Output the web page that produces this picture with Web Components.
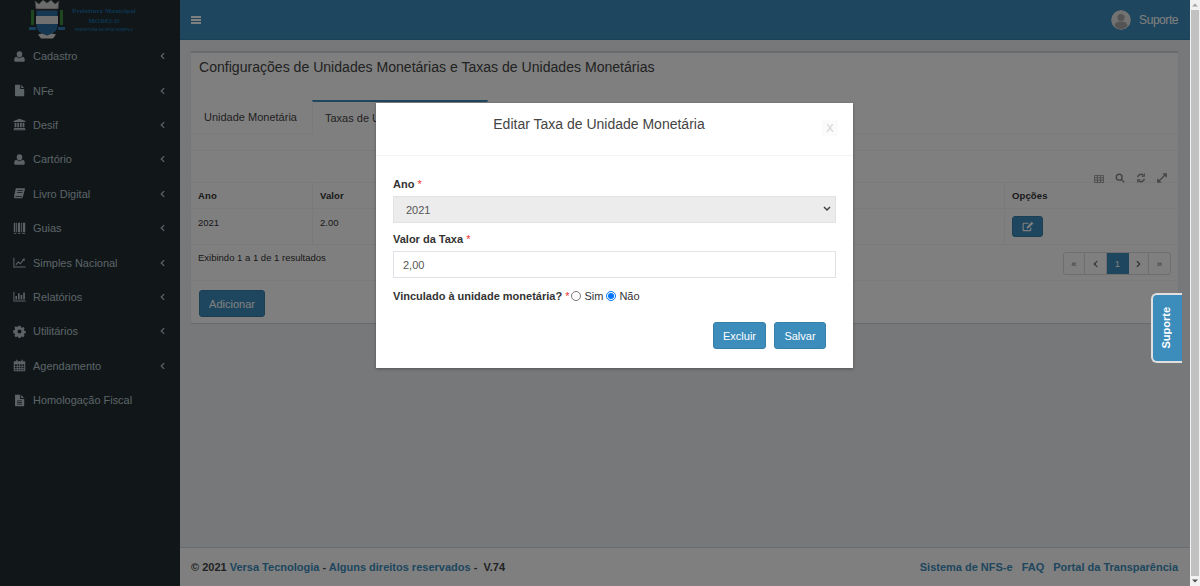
<!DOCTYPE html>
<html lang="pt-BR"><head><meta charset="utf-8"><title>Taxas</title>
<style>
html,body{margin:0;height:586px;overflow:hidden;font-family:"Liberation Sans",Arial,sans-serif}
body{display:flex}
</style></head><body>
<app-shell></app-shell><fake-scrollbar></fake-scrollbar>
<script>
const ICONS={
user:'<path d="M8 1.5a3.4 3.4 0 0 1 3.4 3.6c0 2-1.2 4-3.4 4S4.600 7.100 4.600 5.100A3.400 3.400 0 0 1 8 1.500zM4.400 8.400c.9 1 2.100 1.600 3.600 1.600s2.700-.6 3.600-1.600c1.900.2 2.900 1.700 2.900 4.100 0 1.300-.8 2-2 2H3.500c-1.200 0-2-.7-2-2 0-2.400 1-3.900 2.900-4.100z"/>',
file:'<path d="M2.500 1h6.300v5h5v8.200c0 .5-.3.8-.8.800H3.300c-.5 0-.8-.3-.8-.8zM10 1.200l3.600 3.600H10z"/>',
bank:'<path d="M8 .8l7.300 3v1H.7v-1zM2 5.800h2.200v5.700H2zM5.300 5.800h2.200v5.700H5.300zM8.600 5.800h2.200v5.700H8.600zM11.800 5.800H14v5.700h-2.200zM1.200 12.300h13.600v1.200H1.200zM.6 13.900h14.800v1.300H.6z"/>',
book:'<path d="M4 1.500h10c.7 0 1 .5.8 1.100l-2.700 9.700c-.3 1-1 1.500-2 1.500H2.600c-1.100 0-1.700-.9-1.400-2l2-9c.1-.8.300-1.300.8-1.300zM5.600 4l-.3 1h6.800l.3-1zM5 6.200l-.3 1h6.800l.3-1zM3.400 11.200c-.5 0-.7.7-.2.9h7.600l.5-.9z" fill-rule="evenodd"/>',
guide:'<path d="M1 1h1.800v11.500H1zM3.800 1h1v11.500h-1zM6 1h2.800v11.500H6zM10 1h1v11.500h-1zM12.200 1H15v11.500h-2.800zM1 13.500h3v1H1zM6 13.500h3v1H6zM11 13.500h4v1h-4z"/>',
line:'<path d="M.5 2h1.200v10.800h13.800V14H.5zM3 10.500l3.400-4 2.500 2.200 3.300-4-1.300-1.100 3.600-.6-.3 3.600-1.100-1-4 5-2.600-2.200-2.500 3z"/>',
bars:'<path d="M.5 2h1.200v10.800h13.800V14H.5zM3 7.500h2v4.300H3zM6.200 4h2v7.800h-2zM9.400 6h2v5.800h-2zM12.600 3h2v8.800h-2z"/>',
cog:'<path fill-rule="evenodd" d="M6.700 1h2.600l.4 1.900 1.200.5 1.600-1 1.800 1.800-1 1.600.5 1.200 1.900.4v2.600l-1.900.4-.5 1.200 1 1.600-1.800 1.800-1.600-1-1.200.5-.4 1.900H6.700l-.4-1.900-1.200-.5-1.600 1-1.800-1.800 1-1.600-.5-1.200-1.900-.4V6.400l1.900-.4.5-1.200-1-1.600 1.800-1.800 1.600 1 1.200-.5zM8 5.500a2.500 2.500 0 1 0 0 5 2.500 2.500 0 0 0 0-5z"/>',
cal:'<path fill-rule="evenodd" d="M4 .8h1.500v2H10.500v-2H12v2h2.300c.5 0 .8.300.8.800v10.700c0 .5-.3.800-.8.800H1.700c-.5 0-.8-.3-.8-.8V3.600c0-.5.300-.8.800-.8H4zM2.200 6.500v2h2.500v-2zM5.700 6.500v2h2v-2zM8.700 6.500v2h2v-2zM11.700 6.500v2h2.100v-2zM2.200 9.500v2h2.500v-2zM5.700 9.500v2h2v-2zM8.700 9.500v2h2v-2zM11.700 9.500v2h2.100v-2zM2.200 12.500v1.300h2.500v-1.300zM5.700 12.500v1.300h2v-1.300zM8.700 12.500v1.300h2v-1.300zM11.700 12.500v1.300h2.100v-1.300z"/>',
filetext:'<path fill-rule="evenodd" d="M2.500 1h6.300v5h5v8.200c0 .5-.3.8-.8.800H3.300c-.5 0-.8-.3-.8-.8zM10 1.200l3.600 3.600H10zM5 8v1h6V8zM5 10v1h6v-1zM5 12v1h6v-1z"/>'
};
const chev=(d,w=5,h=8)=>`<svg width="${w}" height="${h}" viewBox="0 0 6 9" fill="none" stroke="currentColor" stroke-width="1.500" aria-hidden="true"><path d="${d}"/></svg>`;
function def(name,html){
  customElements.define(name,class extends HTMLElement{
    constructor(){super();this.attachShadow({mode:'open'}).innerHTML=typeof html==='function'?html(this):html;}
  });
}
def('fake-scrollbar',`<style>
:host{display:flex;flex-direction:column;align-items:stretch;width:10px;height:586px;background:#f1f1f1;flex:none}
i{flex:none;height:10px;display:flex;align-items:center;justify-content:center}
i svg{display:block}
b{flex:1;background:#c1c1c1;margin:0 1px}
</style><i><svg width="6" height="4" viewBox="0 0 6 4"><path d="M3 .5L6 3.500H0z" fill="#a3a3a3"/></svg></i><b></b><i><svg width="6" height="4" viewBox="0 0 6 4"><path d="M3 3.500L0 .5h6z" fill="#505050"/></svg></i>`);

def('nav-item',h=>`<style>
:host{display:flex;align-items:center;height:34.4px;padding-left:13px;padding-right:15px;color:#b8c7ce;font-size:10.950px}
svg.i{flex:none;width:13px;height:13px}
.t{flex:1;margin-left:7px;white-space:nowrap}
svg.c{flex:none}
</style><svg class="i" viewBox="0 0 16 16" fill="currentColor" aria-hidden="true">${ICONS[h.getAttribute('icon')]}</svg><span class="t"><slot></slot></span>${h.hasAttribute('leaf')?'':chev('M5 1L1.500 4.500 5 8').replace('<svg','<svg class="c"')}`);

def('side-nav',`<style>
:host{display:block;width:180px;flex:none;background:#222d32;overflow:hidden}
.logo{height:39px;position:relative}
.crest{position:absolute;left:29px;top:-3px}
.tx{position:absolute;left:66px;top:6px;width:76px;text-align:center;color:#1a6fa8;font:bold 6.400px/9.500px "Liberation Serif",serif;letter-spacing:.3px;white-space:nowrap}
.tx small{display:block;font:bold 3.300px/6px "Liberation Sans",sans-serif;letter-spacing:.2px;margin-top:2px}
nav{display:block}
</style>
<div class="logo">
<svg class="crest" width="36" height="42" viewBox="0 0 36 42" aria-hidden="true">
<path d="M6 4l4 3 4-4 4 3 4-3 4 4 4-3-1 8H7z" fill="#d9d9d9" stroke="#777" stroke-width=".8"/>
<path d="M2 13h3v15H2zM31 13h3v15h-3z" fill="#3f8f3f"/>
<path d="M0 30h7v3H0zM29 30h7v3h-7z" fill="#2f7fb8"/>
<path d="M7 13h22v16c0 6-6 8-11 10-5-2-11-4-11-10z" fill="#2b6fa3" stroke="#222" stroke-width=".8"/>
<path d="M7 19h22v8H7z" fill="#e0e0e0"/>
<path d="M9 37.500l4-1 5 2 5-2 4 1-3 4H12z" fill="#dcdcdc"/>
</svg>
<div class="tx">Prefeitura Municipal<br>MODELO<small>PREFEITURA DE NFSE EXEMPLO</small></div>
</div>
<nav>
<nav-item icon="user">Cadastro</nav-item>
<nav-item icon="file">NFe</nav-item>
<nav-item icon="bank">Desif</nav-item>
<nav-item icon="user">Cartório</nav-item>
<nav-item icon="book">Livro Digital</nav-item>
<nav-item icon="guide">Guias</nav-item>
<nav-item icon="line">Simples Nacional</nav-item>
<nav-item icon="bars">Relatórios</nav-item>
<nav-item icon="cog">Utilitários</nav-item>
<nav-item icon="cal">Agendamento</nav-item>
<nav-item icon="filetext" leaf>Homologação Fiscal</nav-item>
</nav>`);

def('top-bar',`<style>
:host{display:flex;align-items:center;height:39px;background:#3c8dbc;color:#fff;padding:0 12px 0 11px;border-bottom:1px solid #367fa9;flex:none}
.b{width:10px;height:8px;border-top:2px solid #fff;border-bottom:2px solid #fff;position:relative;box-sizing:border-box}
.b:after{content:"";position:absolute;left:0;right:0;top:1px;height:2px;background:#fff}
.sp{flex:1}
.av{width:20px;height:20px;border-radius:50%;overflow:hidden;margin-right:8px}
.n{font-size:12px;letter-spacing:-.45px}
</style><span class="b"></span><span class="sp"></span>
<svg class="av" viewBox="0 0 20 20" aria-hidden="true"><circle cx="10" cy="10" r="10" fill="#e4e4e4"/><circle cx="10" cy="7.500" r="3.600" fill="#a9a9a9"/><path d="M3.500 16c.5-3.500 3-4.500 6.500-4.500s6 1 6.500 4.500c-1.500 2-4 3-6.500 3s-5-1-6.500-3z" fill="#a9a9a9"/></svg>
<span class="n">Suporte</span>`);

def('tab-strip',`<style>
:host{display:flex;height:34px;border-bottom:1px solid #f4f4f4;background:#fff;color:#444;font-size:11px;box-sizing:border-box}
.t{box-sizing:border-box;padding:0 13px;display:flex;align-items:center;white-space:nowrap}
.a{border-top:2px solid #3c8dbc;border-left:1px solid #f4f4f4;border-right:1px solid #f4f4f4;height:34px;background:#fff;width:176px;padding-left:12px}
.u{width:121px}
</style><div class="t u">Unidade Monetária</div><div class="t a">Taxas de Unidades Monetárias</div>`);

def('data-table',`<style>
:host{display:block;color:#333;font-size:9.500px}
.tools{height:32px;border-top:1px solid #f4f4f4;display:flex;justify-content:flex-end;align-items:flex-end;gap:11px;padding:0 11px 0 0;box-sizing:border-box;color:#8a8a8a}
.tools svg{display:block;margin-bottom:-1px}
.r{display:grid;grid-template-columns:122px 1fr 173px;border-top:1px solid #f4f4f4}
.c{padding:0 7px;display:flex;align-items:center;border-right:1px solid #f4f4f4}
.c:last-child{border-right:0}
.h{height:25px;font-weight:bold;letter-spacing:.12px}
.d{height:35px}
.tx{padding-bottom:8px}
.edit{width:31px;height:21px;background:#3c8dbc;border:1px solid #367fa9;border-radius:3px;box-sizing:border-box;display:flex;align-items:center;justify-content:center}
.f{display:flex;justify-content:space-between;border-top:1px solid #f4f4f4;height:36px;box-sizing:border-box;padding:6px 7px 0 7px}
.f span{padding-top:1px}
.pg{display:flex;height:23px;border:1px solid #ddd;border-radius:3px;box-sizing:border-box;color:#666;margin-top:1px;width:108px}
.pg b{font-weight:normal;display:flex;align-items:center;justify-content:center;width:22px;box-sizing:border-box;border-right:1px solid #ddd;font-size:9.500px}
.pg b:nth-child(1){width:21px}
.pg b:nth-child(4){width:20px}
.pg b:last-child{border-right:0;flex:1}
.pg .on{background:#3c8dbc;color:#fff;border-color:#3c8dbc}
</style>
<div class="tools">
<svg width="10" height="8" viewBox="0 0 12 10" fill="none" stroke="currentColor"><path d="M.5.5h11v9H.5zM.5 3.500h11M.5 6.500h11M4 .5v9M8 .5v9"/></svg>
<svg width="10" height="10" viewBox="0 0 12 12" fill="none" stroke="currentColor" stroke-width="1.700"><circle cx="5" cy="5" r="3.500"/><path d="M7.500 7.500l3.500 3.500"/></svg>
<svg width="10" height="10" viewBox="0 0 12 12" fill="none" stroke="currentColor" stroke-width="1.700"><path d="M2 5a4 4 0 0 1 7-2M10 7a4 4 0 0 1-7 2"/><path d="M10 .5v3.300H6.700M2 11.500V8.200h3.300" stroke-width="1.300"/></svg>
<svg width="10" height="10" viewBox="0 0 12 12" fill="none" stroke="currentColor" stroke-width="1.600"><path d="M1.500 10.500l9-9M7 1h4v4M1 7v4h4"/></svg>
</div>
<div class="r h"><div class="c">Ano</div><div class="c">Valor</div><div class="c">Opções</div></div>
<div class="r d"><div class="c tx">2021</div><div class="c tx">2.00</div><div class="c"><span class="edit"><svg width="12" height="11" viewBox="0 0 13 12" fill="none" stroke="#fff" stroke-width="1.200"><path d="M9.500 7v2.800c0 .5-.3.700-.7.700H2c-.5 0-.8-.3-.8-.8V3.200c0-.5.300-.7.800-.7h5"/><path d="M5 8.300l.3-2.100L10.600.9l1.700 1.700L7 7.900z" fill="#fff" stroke="none"/></svg></span></div></div>
<div class="f"><span>Exibindo 1 a 1 de 1 resultados</span>
<div class="pg"><b>«</b><b>${chev('M5 1L1.500 4.500 5 8')}</b><b class="on">1</b><b>${chev('M1 1l3.500 3.500L1 8')}</b><b>»</b></div></div>`);

def('ui-button',`<style>
:host{display:inline-flex;align-items:center;justify-content:center;background:#3c8dbc;border:1px solid #367fa9;border-radius:3px;color:#fff;font-size:11px;box-sizing:border-box;height:27px;padding:0 10px}
</style><slot></slot>`);

def('content-panel',`<style>
:host{display:block;margin:11px 12px 0 11px;background:#fff;border-top:2px solid #d2d6de;box-shadow:0 1px 1px rgba(0,0,0,.1);height:272px;box-sizing:border-box}
h1{margin:0;font-weight:normal;font-size:14.070px;color:#444;height:47px;box-sizing:border-box;padding:6px 8px 0;line-height:17px;white-space:nowrap}
.foot{border-top:1px solid #f4f4f4;padding:9px 8px 0}
ui-button{height:27px;width:66px;padding:0}
</style>
<h1>Configurações de Unidades Monetárias e Taxas de Unidades Monetárias</h1>
<tab-strip></tab-strip>
<div style="height:16px"></div>
<data-table></data-table>
<div class="foot"><ui-button>Adicionar</ui-button></div>`);

def('page-footer',`<style>
:host{display:flex;justify-content:space-between;align-items:center;height:39px;box-sizing:border-box;background:#fff;border-top:1px solid #d2d6de;padding:0 12px 0 11px;font-size:11px;font-weight:bold;color:#444;flex:none;white-space:nowrap}
a{color:#3c8dbc;text-decoration:none}
.rt{display:flex;gap:9px}
</style><div>© 2021 <a>Versa Tecnologia</a> - <a>Alguns direitos reservados</a> - &nbsp;V.74</div>
<div class="rt"><a>Sistema de NFS-e</a><a>FAQ</a><a>Portal da Transparência</a></div>`);

def('edit-modal',`<style>
:host{position:absolute;left:376px;top:103px;width:477px;height:265px;background:#fff;box-shadow:0 1px 3px rgba(0,0,0,.3);display:block;color:#333;font-size:11px;z-index:2}
.hd{height:53px;box-sizing:border-box;border-bottom:1px solid #f4f4f4;position:relative;text-align:center;padding:13px 31px 0 0;font-size:14px;line-height:16px;color:#444}
.x{position:absolute;right:15px;top:17px;width:16px;height:16px;background:#fbfbfb;color:#d0d0d0;font-size:11px;display:flex;align-items:center;justify-content:center}
.bd{padding:20px 17px 0;display:flex;flex-direction:column}
label{font-weight:bold;display:block;line-height:16px;height:16px}
label em{color:#e33;font-style:normal;font-weight:normal}
.sel{position:relative;margin-top:4px}
.sel svg{position:absolute;right:5px;top:10px;color:#444}
select{display:block;width:100%;height:27px;background:#ececec;border:1px solid #e2e2e2;font:11px "Liberation Sans",sans-serif;color:#555;opacity:1;box-sizing:border-box;appearance:none;-webkit-appearance:none;padding:0 8px 0 12px}
input.t{display:block;width:100%;height:27px;margin-top:4px;box-sizing:border-box;border:1px solid #dfe2e7;padding:0 9px;font:11px "Liberation Sans",sans-serif;color:#555;background:#fff}
.g{margin-top:8px}
.rw{display:flex;align-items:center;margin-top:10px;height:16px}
.rw label{margin-right:2px}
.rw input{margin:0 3px 0 0;width:10px;height:10px}
.rw span{margin-right:3px}
.ft{display:flex;justify-content:flex-end;gap:8px;padding:18px 10px 0 0}
ui-button{padding:0}
</style>
<div class="hd">Editar Taxa de Unidade Monetária<span class="x">X</span></div>
<div class="bd">
<div><label>Ano <em>*</em></label><div class="sel"><select disabled><option>2021</option></select><svg width="8" height="6" viewBox="0 0 8 6" fill="none" stroke="currentColor" stroke-width="1.500"><path d="M1 1l3 3 3-3"/></svg></div></div>
<div class="g"><label>Valor da Taxa <em>*</em></label><input class="t" value="2,00"></div>
<div class="rw"><label>Vinculado à unidade monetária? <em>*</em></label><input type="radio" name="v"><span>Sim</span><input type="radio" name="v" checked><span>Não</span></div>
<div class="ft"><ui-button style="width:53px">Excluir</ui-button><ui-button style="width:52px">Salvar</ui-button></div>
</div>`);

def('support-tab',`<style>
:host{position:absolute;left:1151px;top:293px;width:31px;height:70px;box-sizing:border-box;background:#3c8dbc;border:2px solid #e0e0e0;border-right:0;border-radius:6px 0 0 6px;color:#fff;font-weight:bold;font-size:11px;display:flex;align-items:center;justify-content:center;padding-right:3px;z-index:3}
span{writing-mode:vertical-rl;transform:rotate(180deg)}
</style><span>Suporte</span>`);

def('app-shell',`<style>
:host{display:flex;flex:1;height:586px;position:relative;background:#ecf0f5;min-width:0}
.m{flex:1;display:flex;flex-direction:column;min-width:0}
.sp{flex:1}
.ov{position:absolute;inset:0;background:rgba(0,0,0,.5);z-index:1}
</style>
<side-nav></side-nav>
<div class="m"><top-bar></top-bar><content-panel></content-panel><div class="sp"></div><page-footer></page-footer></div>
<div class="ov"></div><edit-modal></edit-modal><support-tab></support-tab>`);
</script>
</body></html>
